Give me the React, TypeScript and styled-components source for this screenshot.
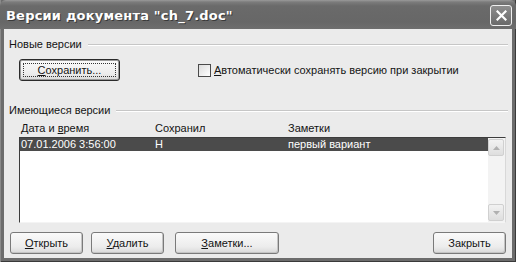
import React from "react";
import styled, { createGlobalStyle } from "styled-components";

const Global = createGlobalStyle`
  html, body { margin: 0; padding: 0; background: #ffffff; }
  body { font-family: "Liberation Sans", Arial, sans-serif; }
`;

const Window = styled.div`
  width: 516px;
  height: 262px;
  box-sizing: border-box;
  display: flex;
  flex-direction: column;
  background: #6c6c6c;
  padding: 0 4px 4px 4px;
  box-shadow: inset 1px 0 0 #8a8a8a, inset -1px -1px 0 #3a3a3a;
`;

const TitleBar = styled.div`
  height: 29px;
  flex: none;
  display: flex;
  align-items: center;
  justify-content: space-between;
  margin: 0 -4px;
  padding: 0 4px 0 6px;
  background: linear-gradient(#9a9a9a 0px, #7c7c7c 2px, #6a6a6a 6px, #676767 22px, #6e6e6e 29px);
  border-top-left-radius: 6px;
  border-top-right-radius: 6px;
`;

const Title = styled.span`
  color: #ffffff;
  font-family: "DejaVu Sans", sans-serif;
  font-weight: bold;
  font-size: 13px;
  letter-spacing: 0.2px;
  text-shadow: 1px 1px 0 #3a3a3a;
  padding-top: 1px;
`;

const CloseButton = styled.div`
  width: 20px;
  height: 19px;
  border: 1px solid #f0f0f0;
  border-radius: 3px;
  background: linear-gradient(#8e8e8e, #6a6a6a);
  display: flex;
  align-items: center;
  justify-content: center;
  margin-top: 2px;
`;

const Body = styled.div`
  flex: 1;
  background: #ebebeb;
  display: flex;
  flex-direction: column;
  padding: 9px 4px 0 5px;
  font-size: 11px;
  line-height: 13px;
  color: #141414;
`;

const GroupHeader = styled.div<{ $top?: number }>`
  display: flex;
  align-items: center;
  gap: 6px;
  height: 13px;
  margin-top: ${(p) => p.$top ?? 0}px;
  &::after {
    content: "";
    flex: 1;
    height: 0;
    border-top: 1px solid #c6c6c6;
    border-bottom: 1px solid #ffffff;
  }
`;

const NewRow = styled.div`
  display: flex;
  align-items: center;
  margin-top: 8px;
  padding-left: 10px;
  height: 22px;
`;

const Button = styled.button<{ $w: number; $default?: boolean; $gap?: number }>`
  width: ${(p) => p.$w}px;
  height: 22px;
  margin-left: ${(p) => p.$gap ?? 0}px;
  box-sizing: border-box;
  padding: 0;
  font-family: "Liberation Sans", Arial, sans-serif;
  font-size: 11px;
  color: #141414;
  border: 1px solid ${(p) => (p.$default ? "#2a2a2a" : "#7a7a7a")};
  border-radius: 3px;
  background: linear-gradient(#fafafa, #ececec 70%, #d8d8d8);
  box-shadow: ${(p) =>
    p.$default ? "inset 0 0 0 1px #9a9a9a" : "inset -1px -1px 0 #c4c4c4"};
  position: relative;
  display: flex;
  align-items: center;
  justify-content: center;
  flex: none;
`;

const Focus = styled.span`
  position: absolute;
  inset: 3px;
  border: 1px dotted #333;
`;

const U = styled.span`
  text-decoration: underline;
`;

const CheckLabel = styled.label`
  display: flex;
  align-items: center;
  gap: 3px;
  margin-left: 78px;
`;

const CheckBox = styled.span`
  width: 11px;
  height: 11px;
  border: 1px solid #4a4a4a;
  background: linear-gradient(135deg, #dcdcdc, #ffffff);
`;

const Columns = styled.div`
  display: grid;
  grid-template-columns: 134px 133px 1fr;
  padding-left: 12px;
  margin-top: 4px;
  height: 14px;
  align-items: center;
`;

const ListBox = styled.div`
  margin: 2px 0 0 10px;
  width: 487px;
  height: 86px;
  box-sizing: border-box;
  border: 1px solid #3c3c3c;
  border-right-color: #d8d8d8;
  border-bottom-color: #f4f4f4;
  background: #ffffff;
  display: flex;
`;

const Rows = styled.div`
  flex: 1;
  display: flex;
  flex-direction: column;
`;

const Row = styled.div<{ $selected?: boolean }>`
  display: grid;
  grid-template-columns: 134px 133px 1fr;
  height: 13px;
  align-items: center;
  padding-left: 1px;
  background: ${(p) => (p.$selected ? "#4b4b4b" : "transparent")};
  color: ${(p) => (p.$selected ? "#ffffff" : "#141414")};
`;

const ScrollBar = styled.div`
  width: 17px;
  display: flex;
  flex-direction: column;
  justify-content: space-between;
  background: #f3f3f3;
  padding: 1px 0;
`;

const ScrollBtn = styled.div`
  width: 16px;
  height: 17px;
  box-sizing: border-box;
  border: 1px solid #d0d0d0;
  border-radius: 2px;
  background: linear-gradient(#f2f2f2, #dedede);
  display: flex;
  align-items: center;
  justify-content: center;
`;

const Footer = styled.div`
  display: flex;
  gap: 8px;
  margin-top: 9px;
  padding-left: 1px;
  padding-right: 2px;
`;

const Spacer = styled.div`
  flex: 1;
`;

const Arrow = ({ up }: { up?: boolean }) => (
  <svg width="7" height="4" viewBox="0 0 7 4">
    <path d={up ? "M0 4 L3.5 0 L7 4 Z" : "M0 0 L3.5 4 L7 0 Z"} fill="#b0b0b0" />
  </svg>
);

export default function App() {
  return (
    <>
      <Global />
      <Window>
        <TitleBar>
          <Title>Версии документа "ch_7.doc"</Title>
          <CloseButton>
            <svg width="11" height="11" viewBox="0 0 11 11">
              <path d="M1.5 1.5 L9.5 9.5 M9.5 1.5 L1.5 9.5" stroke="#ffffff" strokeWidth="2.2" strokeLinecap="square" />
            </svg>
          </CloseButton>
        </TitleBar>
        <Body>
          <GroupHeader>Новые версии</GroupHeader>
          <NewRow>
            <Button $w={101} $default>
              <Focus />
              <span>
                <U>С</U>охранить...
              </span>
            </Button>
            <CheckLabel>
              <CheckBox />
              <span>
                <U>А</U>втоматически сохранять версию при закрытии
              </span>
            </CheckLabel>
          </NewRow>
          <GroupHeader $top={23}>Имеющиеся версии</GroupHeader>
          <Columns>
            <span>
              Дата и <U>в</U>ремя
            </span>
            <span>Сохранил</span>
            <span>Заметки</span>
          </Columns>
          <ListBox>
            <Rows>
              <Row $selected>
                <span>07.01.2006 3:56:00</span>
                <span>Н</span>
                <span>первый вариант</span>
              </Row>
            </Rows>
            <ScrollBar>
              <ScrollBtn>
                <Arrow up />
              </ScrollBtn>
              <ScrollBtn>
                <Arrow />
              </ScrollBtn>
            </ScrollBar>
          </ListBox>
          <Footer>
            <Button $w={73}>
              <span>
                <U>О</U>ткрыть
              </span>
            </Button>
            <Button $w={73}>
              <span>
                <U>У</U>далить
              </span>
            </Button>
            <Button $w={104} $gap={3}>
              <span>
                <U>З</U>аметки...
              </span>
            </Button>
            <Spacer />
            <Button $w={73}>
              <span>Закрыть</span>
            </Button>
          </Footer>
        </Body>
      </Window>
    </>
  );
}
